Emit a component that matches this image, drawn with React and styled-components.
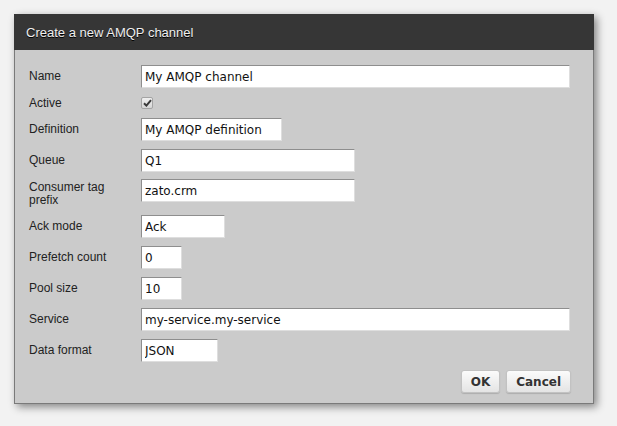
import React from 'react';
import styled, { createGlobalStyle } from 'styled-components';

const GlobalStyle = createGlobalStyle`
  html, body {
    margin: 0;
    padding: 0;
    background: #f2f2f2;
  }
  * {
    box-sizing: border-box;
  }
`

const Page = styled.div`
  padding: 14px 0 0 14px;
  height: 426px;
  background: #f2f2f2;
`

const Dialog = styled.div`
  width: 580px;
  display: flex;
  flex-direction: column;
  box-shadow: 3px 3px 8px rgba(0, 0, 0, 0.45);
`

const TitleBar = styled.div`
  height: 36px;
  background: #363636;
  color: #efefef;
  font-family: "Liberation Sans", Arial, sans-serif;
  font-size: 13px;
  display: flex;
  align-items: center;
  padding-left: 12px;
  text-shadow: 0 1px 0 #000;
`

const Body = styled.div`
  height: 354px;
  background: #cbcbcb;
  border: 1px solid #7a7a7a;
  border-top: none;
  padding: 15px 22px 0 14px;
  display: flex;
  flex-direction: column;
`

const Form = styled.div`
  display: grid;
  grid-template-columns: 112px 1fr;
  row-gap: 8px;
  align-items: center;
`

const Label = styled.label`
  font-family: "Liberation Sans", Arial, sans-serif;
  font-size: 12px;
  line-height: 13px;
  color: #222;
  padding-right: 8px;
  align-self: ${p => (p.$top ? 'start' : 'center')};
  padding-top: ${p => (p.$top ? '1px' : '0')};
`

const Field = styled.input`
  width: ${p => p.$w}px;
  height: 23px;
  border: 1px solid;
  border-color: #8e8e8e #dedede #dedede #8e8e8e;
  background: #fff;
  padding: 1px 3px 0;
  font-family: "DejaVu Sans", Verdana, sans-serif;
  font-size: 12px;
  color: #111;
  outline: none;
  display: block;
  align-self: ${p => (p.$top ? 'start' : 'center')};
  margin-top: ${p => (p.$top ? '-1px' : '0')};
`

const CheckCell = styled.div`
  height: 14px;
  display: flex;
  align-items: center;
`

const CheckBox = styled.span`
  width: 12px;
  height: 12px;
  border: 1px solid #a4a4a4;
  border-radius: 2px;
  background: linear-gradient(#f0f0f0, #d6d6d6);
  display: flex;
  align-items: center;
  justify-content: center;
`

const Buttons = styled.div`
  display: flex;
  justify-content: flex-end;
  gap: 6px;
  margin-top: 8px;
`

const Button = styled.button`
  height: 23px;
  padding: 0 9px;
  border: 1px solid #c2c2c2;
  border-radius: 3px;
  background: linear-gradient(#fbfbfb, #e4e4e4);
  box-shadow: 0 1px 1px rgba(0, 0, 0, 0.15);
  font-family: "DejaVu Sans", Verdana, sans-serif;
  font-weight: bold;
  font-size: 12px;
  color: #333;
  cursor: pointer;
`

const fields = [
  { label: 'Name', value: 'My AMQP channel', w: 429 },
  { label: 'Active', check: true },
  { label: 'Definition', value: 'My AMQP definition', w: 141 },
  { label: 'Queue', value: 'Q1', w: 214 },
  { label: 'Consumer tag prefix', value: 'zato.crm', w: 214, top: true },
  { label: 'Ack mode', value: 'Ack', w: 84 },
  { label: 'Prefetch count', value: '0', w: 41 },
  { label: 'Pool size', value: '10', w: 41 },
  { label: 'Service', value: 'my-service.my-service', w: 429 },
  { label: 'Data format', value: 'JSON', w: 77 },
];

export default function App() {
  return (
    <Page>
      <GlobalStyle />
      <Dialog>
        <TitleBar>Create a new AMQP channel</TitleBar>
        <Body>
          <Form>
            {fields.map(f => (
              <React.Fragment key={f.label}>
                <Label $top={f.top}>{f.label}</Label>
                {f.check ? (
                  <CheckCell>
                    <CheckBox>
                      <svg width="9" height="8" viewBox="0 0 9 8">
                        <path d="M1 4.2 L3.4 6.6 L8 1.2" fill="none" stroke="#3a3a3a" strokeWidth="2" />
                      </svg>
                    </CheckBox>
                  </CheckCell>
                ) : (
                  <Field $w={f.w} $top={f.top} defaultValue={f.value} />
                )}
              </React.Fragment>
            ))}
          </Form>
          <Buttons>
            <Button>OK</Button>
            <Button>Cancel</Button>
          </Buttons>
        </Body>
      </Dialog>
    </Page>
  );
}
